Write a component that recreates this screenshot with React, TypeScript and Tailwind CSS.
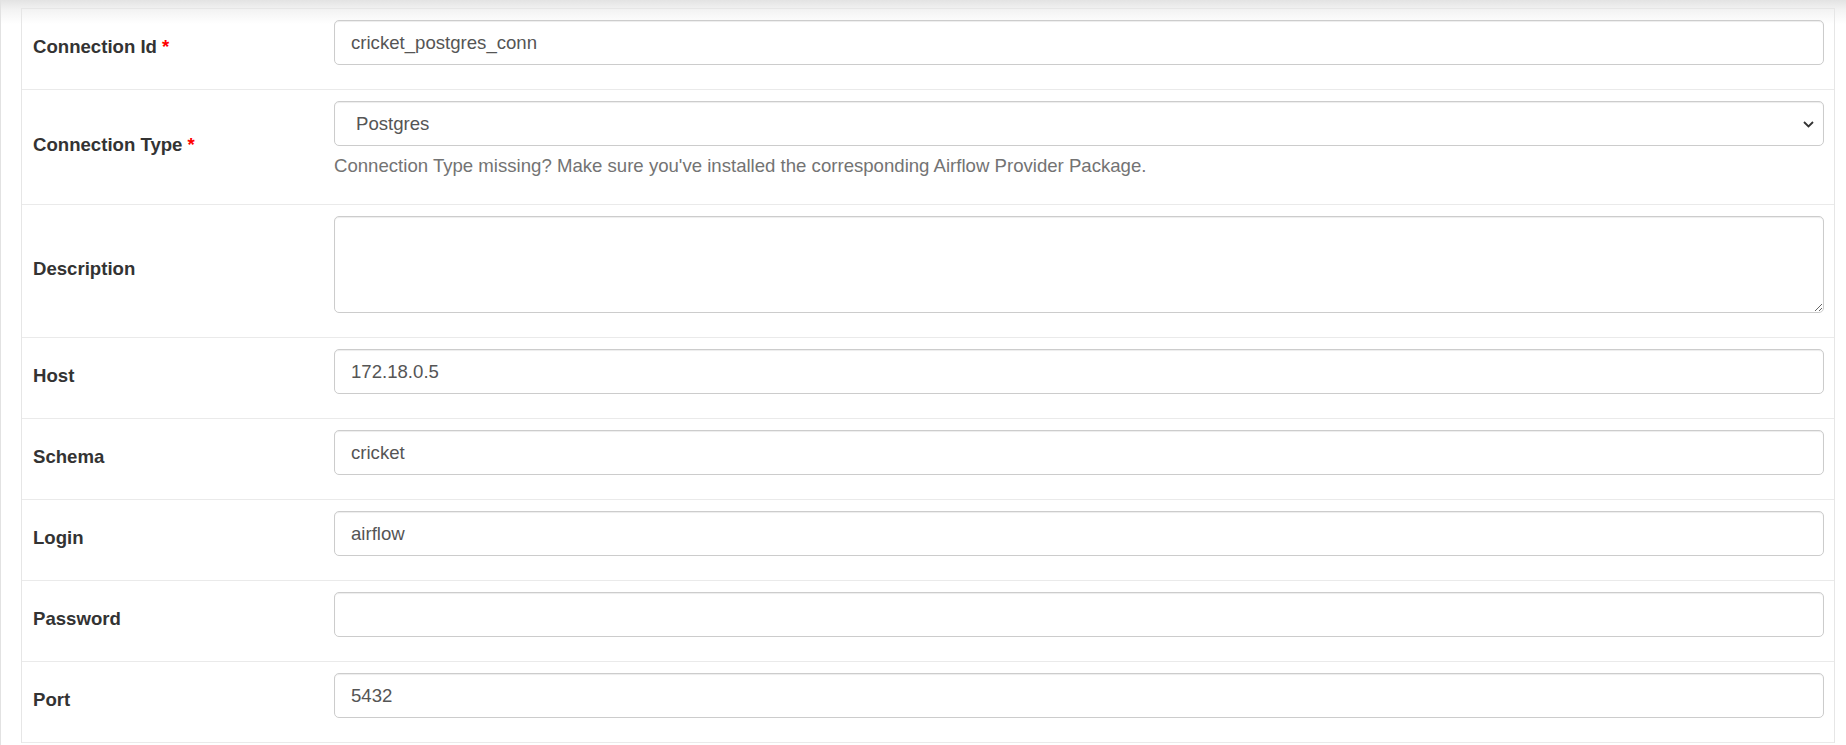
import React from 'react';

type Field = {
  label: string;
  value?: string;
  required?: boolean;
  kind?: 'input' | 'select' | 'textarea' | 'password';
};

const fields: Field[] = [
  { label: 'Connection Id', value: 'cricket_postgres_conn', required: true },
  { label: 'Connection Type', value: 'Postgres', required: true, kind: 'select' },
  { label: 'Description', kind: 'textarea' },
  { label: 'Host', value: '172.18.0.5' },
  { label: 'Schema', value: 'cricket' },
  { label: 'Login', value: 'airflow' },
  { label: 'Password', kind: 'password' },
  { label: 'Port', value: '5432' },
];

const control =
  'block w-full rounded-[5px] border border-[#cccccc] bg-white text-[18.6px] text-[#555555] shadow-[inset_0_1px_1px_rgba(0,0,0,0.075)] outline-none';

function Control({ field }: { field: Field }) {
  if (field.kind === 'select') {
    return (
      <>
        <div className="relative">
          <select
            defaultValue={field.value}
            className={`${control} h-[45px] appearance-none pl-[21px] pr-10`}
          >
            <option>{field.value}</option>
          </select>
          <svg
            className="pointer-events-none absolute right-[10px] top-[20px]"
            width="11"
            height="7"
            viewBox="0 0 11 7"
          >
            <polyline points="1,1 5.5,5.5 10,1" fill="none" stroke="#333" strokeWidth="1.8" />
          </svg>
        </div>
        <p className="mt-[6px] mb-[14px] text-[18.6px] leading-[27px] text-[#737373]">
          Connection Type missing? Make sure you've installed the corresponding Airflow Provider Package.
        </p>
      </>
    );
  }
  if (field.kind === 'textarea') {
    return <textarea className={`${control} mb-[13px] h-[97px] px-4 py-2`} />;
  }
  return (
    <input
      type={field.kind === 'password' ? 'password' : 'text'}
      defaultValue={field.value}
      className={`${control} mb-[13px] h-[45px] px-4`}
    />
  );
}

function App() {
  return (
    <div
      className="min-h-screen border-l border-[#e2e2e2] bg-white bg-[linear-gradient(to_bottom,#e3e3e3_0px,#f3f3f3_10px,#ffffff_24px)] bg-no-repeat pl-[20px] pr-[11px] pt-[8px]"
      style={{ fontFamily: '"Liberation Sans", Arial, sans-serif' }}
    >
      <div className="border-x border-t border-[#e6e6e6]">
        {fields.map((f) => (
          <div key={f.label} className="flex border-b border-[#eaeaea]">
            <div className="flex w-[302px] shrink-0 items-center px-[11px] pb-[5px] text-[18.6px] font-bold text-[#333333]">
              {f.label}
              {f.required && <span className="ml-[5px] text-[#ff0000]">*</span>}
            </div>
            <div className="flex-1 pl-[10px] pr-[10px] pt-[11px] pb-[11px]">
              <Control field={f} />
            </div>
          </div>
        ))}
      </div>
    </div>
  );
}

export default App;
